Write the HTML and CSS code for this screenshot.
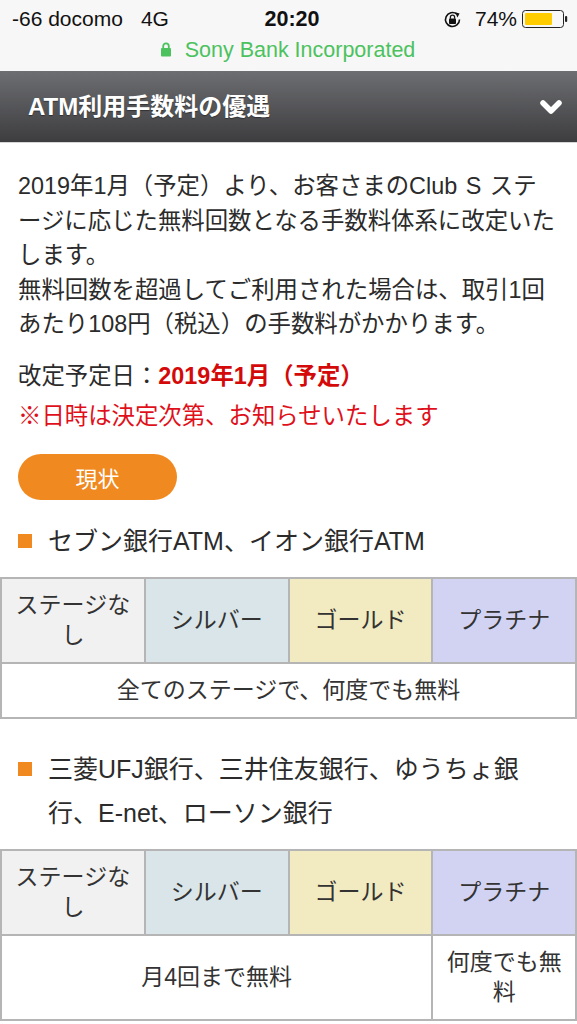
FILE: index.html
```html
<!DOCTYPE html>
<html lang="ja">
<head>
    <meta charset="UTF-8">
    <meta name="viewport" content="width=device-width, initial-scale=1.0">
    <title>ATM利用手数料の優遇</title>
    <link rel="stylesheet" href="styles.css">
</head>
<body>
    <!-- ステータスバー -->
    <div class="statusbar">
        <div class="status-row">
            <span class="carrier">-66 docomo<span class="net">4G</span></span>
            <span class="clock">20:20</span>
            <span class="status-right">
                <svg class="rotate-lock" width="21" height="21" viewBox="0 0 21 21">
                    <path d="M17.5 10.5 A7 7 0 1 1 14.8 5" fill="none" stroke="#111" stroke-width="1.6"/>
                    <path d="M13.2 3.2 L17.6 4.6 L15.4 8.4 Z" fill="#111"/>
                    <rect x="7" y="9.6" width="7" height="5.4" rx="0.8" fill="#111"/>
                    <path d="M8.4 9.8 V8.2 a2.1 2.1 0 0 1 4.2 0 V9.8" fill="none" stroke="#111" stroke-width="1.3"/>
                </svg>
                <span class="battery-text">74%</span>
                <svg class="battery" width="46" height="20" viewBox="0 0 46 20">
                    <rect x="0.5" y="1.5" width="41" height="17" rx="3" fill="none" stroke="#222" stroke-width="1"/>
                    <rect x="3" y="4" width="27" height="12" rx="1" fill="#ffcc00"/>
                    <rect x="43" y="7" width="2.2" height="6" rx="1" fill="#222"/>
                </svg>
            </span>
        </div>
        <div class="url">
            <svg width="12" height="15" viewBox="0 0 12 15">
                <rect x="1" y="6" width="10" height="8.5" rx="1" fill="#4cc25e"/>
                <path d="M3.2 6.5 V4.2 a2.8 2.8 0 0 1 5.6 0 V6.5" fill="none" stroke="#4cc25e" stroke-width="1.8"/>
            </svg>
            Sony Bank Incorporated
        </div>
    </div>

    <!-- 見出し -->
    <header class="section-head">
        <h1>ATM利用手数料の優遇</h1>
        <svg class="chevron" width="24" height="18" viewBox="0 0 24 18">
            <polyline points="4,5 12,13 20,5" fill="none" stroke="#fff" stroke-width="5.5" stroke-linecap="round" stroke-linejoin="round"/>
        </svg>
    </header>

    <main class="content">
        <p class="lead">2019年1月（予定）より、お客さまのClub S ステージに応じた無料回数となる手数料体系に改定いたします。<br>無料回数を超過してご利用された場合は、取引1回あたり108円（税込）の手数料がかかります。</p>

        <p class="date">改定予定日：<strong>2019年1月（予定）</strong></p>
        <p class="note">※日時は決定次第、お知らせいたします</p>

        <button class="tab">現状</button>

        <!-- セブン銀行・イオン銀行 -->
        <h2 class="bank-title">セブン銀行ATM、イオン銀行ATM</h2>
        <table class="fee-table">
            <tr>
                <th class="stage-none">ステージなし</th>
                <th class="stage-silver">シルバー</th>
                <th class="stage-gold">ゴールド</th>
                <th class="stage-platinum">プラチナ</th>
            </tr>
            <tr>
                <td colspan="4">全てのステージで、何度でも無料</td>
            </tr>
        </table>

        <!-- 三菱UFJ銀行など -->
        <h2 class="bank-title">三菱UFJ銀行、三井住友銀行、ゆうちょ銀行、E-net、ローソン銀行</h2>
        <table class="fee-table">
            <tr>
                <th class="stage-none">ステージなし</th>
                <th class="stage-silver">シルバー</th>
                <th class="stage-gold">ゴールド</th>
                <th class="stage-platinum">プラチナ</th>
            </tr>
            <tr>
                <td colspan="3">月4回まで無料</td>
                <td>何度でも無料</td>
            </tr>
        </table>
    </main>
</body>
</html>
```

FILE: styles.css
```css
body {
    margin: 0;
    padding: 0;
    background-color: #fff;
    font-family: "Liberation Sans", "Noto Sans CJK JP", sans-serif;
    color: #2b2b2b;
    overflow: hidden;
}
.statusbar {
    background-color: #f7f7f7;
    height: 71px;
}
.status-row {
    display: grid;
    grid-template-columns: 1fr auto 1fr;
    align-items: center;
    height: 38px;
    padding: 0 9px 0 12px;
    font-size: 21px;
    color: #111;
}
.net {
    margin-left: 18px;
}
.clock {
    font-weight: bold;
    font-size: 21.5px;
    padding-left: 4px;
}
.status-right {
    display: flex;
    justify-content: flex-end;
    align-items: center;
}
.rotate-lock {
    margin-right: 12px;
}
.battery-text {
    margin-right: 5px;
}
.url {
    display: flex;
    justify-content: center;
    align-items: center;
    gap: 13px;
    font-size: 21.5px;
    color: #4cc25e;
    padding-right: 2px;
}
.url svg {
    margin-top: -2px;
}
.section-head {
    display: flex;
    align-items: center;
    justify-content: space-between;
    height: 71px;
    padding: 0 14px 0 28px;
    background: linear-gradient(#6d6e71, #3d3d40);
    border-bottom: 1px solid #d6d6d6;
}
.section-head h1 {
    margin: -4px 0 0;
    color: #fff;
    font-size: 24px;
    font-weight: bold;
    text-shadow: 0 1px 1px rgba(0, 0, 0, 0.4);
}
.content {
    padding: 26px 18px 0;
}
.lead {
    margin: 0;
    font-size: 23.4px;
    line-height: 34.5px;
    word-spacing: 2px;
}
.date, .note {
    margin: 0;
    font-size: 23.4px;
    line-height: 40px;
}
.date {
    margin-top: 14px;
}
.date strong {
    color: #d40a0a;
}
.note {
    color: #e0101a;
}
.tab {
    display: block;
    width: 159px;
    height: 46px;
    margin-top: 18px;
    border: none;
    border-radius: 23px;
    background-color: #f0891f;
    color: #fff;
    font-family: inherit;
    font-size: 22px;
}
.bank-title {
    position: relative;
    margin: 19px 30px 14px 0;
    padding-left: 30px;
    font-size: 25px;
    font-weight: normal;
    line-height: 44px;
}
.bank-title::before {
    content: "";
    position: absolute;
    left: 0;
    top: 15px;
    width: 14px;
    height: 14px;
    background-color: #f0891f;
}
.fee-table {
    width: calc(100% + 36px);
    margin: 0 -18px 28px;
    border-collapse: collapse;
    table-layout: fixed;
    font-size: 23px;
    line-height: 30px;
}
.fee-table th, .fee-table td {
    border: 2px solid #b5b5b5;
    padding: 11.5px 6px;
    text-align: center;
    font-weight: normal;
    color: #333;
}
.stage-none {
    background-color: #f1f1f1;
}
.stage-silver {
    background-color: #d9e5e8;
}
.stage-gold {
    background-color: #f2eac0;
}
.stage-platinum {
    background-color: #d2d3f2;
}
```
